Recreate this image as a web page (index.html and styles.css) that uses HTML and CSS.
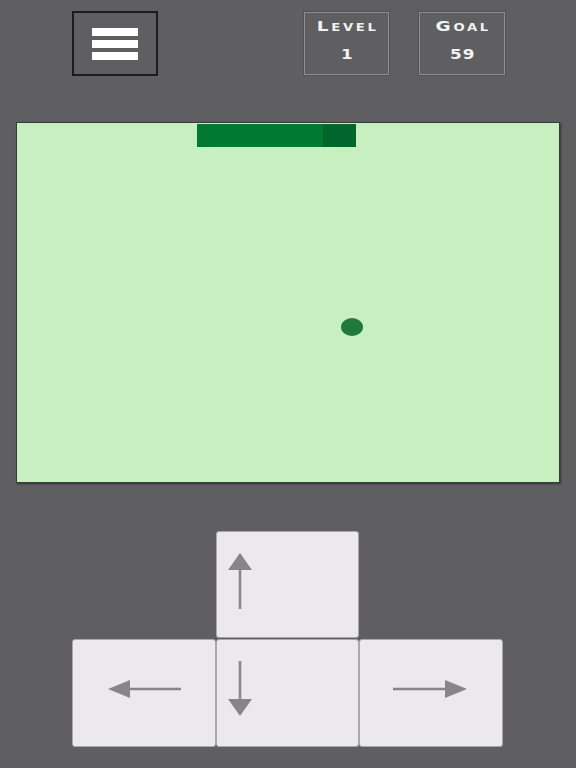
FILE: index.html
```html
<!DOCTYPE html>
<html>
<head>
<meta charset="utf-8">
<link rel="stylesheet" href="styles.css">
</head>
<body>
<div class="app">
  <div class="top">
    <div class="menu">
      <span class="bar"></span>
      <span class="bar"></span>
      <span class="bar"></span>
    </div>
    <div class="stat stat-level">
      <div class="label">Level</div>
      <div class="value">1</div>
    </div>
    <div class="stat stat-goal">
      <div class="label">Goal</div>
      <div class="value">59</div>
    </div>
  </div>
  <div class="field">
    <div class="paddle"><span class="p-main"></span><span class="p-end"></span></div>
    <div class="ball"></div>
  </div>
  <div class="pad">
    <div class="key key-up">
      <svg width="143" height="107" viewBox="0 0 143 107"><line x1="24" y1="36" x2="24" y2="78" class="shaft"/><polygon points="24,22 12,39 36,39" class="head"/></svg>
    </div>
    <div class="key key-left">
      <svg width="144" height="108" viewBox="0 0 144 108"><line x1="55" y1="50" x2="109" y2="50" class="shaft"/><polygon points="36,50 58,41 58,59" class="head"/></svg>
    </div>
    <div class="key key-down">
      <svg width="143" height="108" viewBox="0 0 143 108"><line x1="24" y1="22" x2="24" y2="63" class="shaft"/><polygon points="24,77 12,60 36,60" class="head"/></svg>
    </div>
    <div class="key key-right">
      <svg width="144" height="108" viewBox="0 0 144 108"><line x1="34" y1="50" x2="89" y2="50" class="shaft"/><polygon points="108,50 86,41 86,59" class="head"/></svg>
    </div>
  </div>
</div>
</body>
</html>
```
FILE: styles.css
```css
html, body {
  margin: 0;
  padding: 0;
}
body {
  background: #5f5e60;
  width: 576px;
  height: 768px;
  overflow: hidden;
  font-family: "DejaVu Sans", "Liberation Sans", sans-serif;
}
.app {
  display: flex;
  flex-direction: column;
}
.top {
  display: flex;
  align-items: flex-start;
  padding-top: 11px;
  height: 65px;
}
.menu {
  margin-left: 72px;
  width: 82px;
  height: 61px;
  border: 2px solid #1c1c1d;
  display: flex;
  flex-direction: column;
  align-items: center;
  justify-content: center;
  gap: 4px;
}
.bar {
  display: block;
  width: 46px;
  height: 8px;
  background: #ffffff;
}
.stat {
  width: 83px;
  height: 61px;
  border: 1px solid #8e8d8f;
  box-shadow: 0 0 0 1px #525153;
  margin-top: 1px;
  display: flex;
  flex-direction: column;
  align-items: center;
  color: #f2f2f2;
}
.stat-level {
  margin-left: 146px;
}
.stat-goal {
  margin-left: 30px;
  width: 84px;
}
.label {
  font-variant: small-caps;
  font-size: 14px;
  letter-spacing: 2px;
  padding-left: 2px;
  line-height: 16px;
  margin-top: 5px;
  font-weight: 600;
  transform: scaleX(1.32);
}
.value {
  font-size: 14px;
  line-height: 16px;
  margin-top: 12px;
  font-weight: 600;
  letter-spacing: 1px;
  padding-left: 1px;
  transform: scaleX(1.2);
}
.field {
  position: relative;
  margin-top: 46px;
  margin-left: 16px;
  width: 542px;
  height: 359px;
  background: #c8efc0;
  border: 1px solid #3a3a3a;
  box-shadow: 1px 1px 2px rgba(0,0,0,0.45);
}
.paddle {
  position: absolute;
  left: 180px;
  top: 1px;
  width: 159px;
  height: 23px;
  display: flex;
}
.p-main {
  display: block;
  width: 126px;
  height: 100%;
  background: #007a33;
}
.p-end {
  display: block;
  flex: 1;
  height: 100%;
  background: #00662b;
}
.ball {
  position: absolute;
  left: 324px;
  top: 195px;
  width: 22px;
  height: 18px;
  border-radius: 50%;
  background: #1f7a3a;
}
.pad {
  margin-top: 48px;
  margin-left: 72px;
  display: grid;
  grid-template-columns: 144px 143px 144px;
  grid-template-rows: 107px 108px;
  row-gap: 1px;
}
.key {
  background: #ebe9ec;
  border: 1px solid #a9a8aa;
  border-radius: 3px;
  box-sizing: border-box;
  overflow: hidden;
}
.key svg {
  display: block;
  margin: -1px;
}
.key-up {
  grid-column: 2;
  grid-row: 1;
}
.key-left {
  grid-column: 1;
  grid-row: 2;
}
.key-down {
  grid-column: 2;
  grid-row: 2;
}
.key-right {
  grid-column: 3;
  grid-row: 2;
}
.shaft {
  stroke: #878587;
  stroke-width: 2.5;
}
.head {
  fill: #878587;
}
```
